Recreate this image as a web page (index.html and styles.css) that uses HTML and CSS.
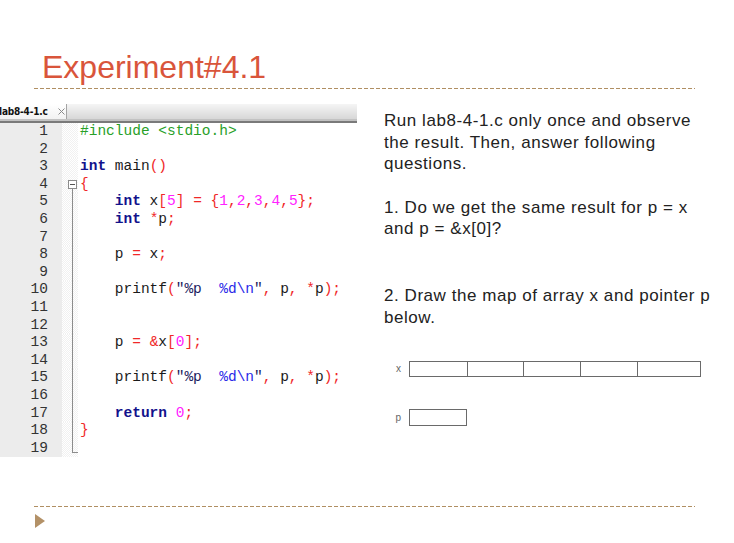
FILE: index.html
```html
<!DOCTYPE html>
<html lang="en">
<head>
<meta charset="utf-8">
<title>Experiment#4.1</title>
<link rel="stylesheet" href="styles.css">
</head>
<body>
<header class="head">
  <h1 class="slide-title">Experiment#4.1</h1>
  <div class="rule"></div>
</header>
<main class="main">
  <section class="editor">
    <div class="tabbar">
      <div class="tab"><span class="tab-name">lab8-4-1.c</span>
        <svg class="tab-x" width="7" height="7" viewBox="0 0 7 7"><path d="M0.5 0.5L6.5 6.5M6.5 0.5L0.5 6.5" stroke="#8a8a8a" stroke-width="1" fill="none"/></svg>
      </div>
    </div>
    <div class="code-area">
      <div class="row"><span class="ln">1</span><span class="fold"></span><span class="code"><span class="pp">#include &lt;stdio.h&gt;</span></span></div>
      <div class="row"><span class="ln">2</span><span class="fold"></span><span class="code"></span></div>
      <div class="row"><span class="ln">3</span><span class="fold"></span><span class="code"><span class="kw">int</span> main<span class="op">()</span></span></div>
      <div class="row"><span class="ln">4</span><span class="fold fold-open"><span class="fold-box"></span></span><span class="code"><span class="op">{</span></span></div>
      <div class="row"><span class="ln">5</span><span class="fold fold-line"></span><span class="code">    <span class="kw">int</span> x<span class="op">[</span><span class="num">5</span><span class="op">]</span> <span class="op">=</span> <span class="op">{</span><span class="num">1</span><span class="op">,</span><span class="num">2</span><span class="op">,</span><span class="num">3</span><span class="op">,</span><span class="num">4</span><span class="op">,</span><span class="num">5</span><span class="op">};</span></span></div>
      <div class="row"><span class="ln">6</span><span class="fold fold-line"></span><span class="code">    <span class="kw">int</span> <span class="op">*</span>p<span class="op">;</span></span></div>
      <div class="row"><span class="ln">7</span><span class="fold fold-line"></span><span class="code"></span></div>
      <div class="row"><span class="ln">8</span><span class="fold fold-line"></span><span class="code">    p <span class="op">=</span> x<span class="op">;</span></span></div>
      <div class="row"><span class="ln">9</span><span class="fold fold-line"></span><span class="code"></span></div>
      <div class="row"><span class="ln">10</span><span class="fold fold-line"></span><span class="code">    printf<span class="op">(</span><span class="str-a">"%p</span><span class="str-b">  %d\n</span><span class="str-a">"</span><span class="op">,</span> p<span class="op">,</span> <span class="op">*</span>p<span class="op">);</span></span></div>
      <div class="row"><span class="ln">11</span><span class="fold fold-line"></span><span class="code"></span></div>
      <div class="row"><span class="ln">12</span><span class="fold fold-line"></span><span class="code"></span></div>
      <div class="row"><span class="ln">13</span><span class="fold fold-line"></span><span class="code">    p <span class="op">=</span> <span class="op">&amp;</span>x<span class="op">[</span><span class="num">0</span><span class="op">];</span></span></div>
      <div class="row"><span class="ln">14</span><span class="fold fold-line"></span><span class="code"></span></div>
      <div class="row"><span class="ln">15</span><span class="fold fold-line"></span><span class="code">    printf<span class="op">(</span><span class="str-a">"%p</span><span class="str-b">  %d\n</span><span class="str-a">"</span><span class="op">,</span> p<span class="op">,</span> <span class="op">*</span>p<span class="op">);</span></span></div>
      <div class="row"><span class="ln">16</span><span class="fold fold-line"></span><span class="code"></span></div>
      <div class="row"><span class="ln">17</span><span class="fold fold-line"></span><span class="code">    <span class="kw">return</span> <span class="num">0</span><span class="op">;</span></span></div>
      <div class="row"><span class="ln">18</span><span class="fold fold-line"></span><span class="code"><span class="op">}</span></span></div>
      <div class="row"><span class="ln">19</span><span class="fold fold-end"></span><span class="code"></span></div>
    </div>
  </section>
  <section class="qa">
    <p class="p1">Run lab8-4-1.c only once and observe the result. Then, answer following questions.</p>
    <p class="p2">1. Do we get the same result for p = x and p = &amp;x[0]?</p>
    <p class="p3">2. Draw the map of array x and pointer p below.</p>
    <div class="mem-row mem-x">
      <span class="mem-label">x</span>
      <div class="array-box"><span class="cell"></span><span class="cell"></span><span class="cell"></span><span class="cell"></span><span class="cell"></span></div>
    </div>
    <div class="mem-row mem-p">
      <span class="mem-label">p</span>
      <div class="ptr-box"></div>
    </div>
  </section>
</main>
<footer class="foot">
  <div class="rule rule-bottom"></div>
  <div class="bullet"></div>
</footer>
</body>
</html>
```
FILE: styles.css
```css
html, body {
  margin: 0;
  padding: 0;
}
body {
  width: 734px;
  height: 543px;
  overflow: hidden;
  background: #ffffff;
  font-family: "Liberation Sans", Arial, sans-serif;
}

.slide-title {
  margin: 0;
  padding: 50px 0 0 42px;
  font-size: 32px;
  line-height: 34px;
  font-weight: normal;
  color: #d9553b;
}

.rule {
  width: 661px;
  height: 1px;
  margin: 4px 0 0 34px;
  background: repeating-linear-gradient(90deg, #b08f63 0 4px, transparent 4px 6px);
}

.main {
  display: flex;
  align-items: flex-start;
  margin-top: 15px;
  height: 402px;
}

/* ---------- editor ---------- */
.editor {
  width: 357px;
  flex: none;
}
.tabbar {
  height: 19px;
  background: linear-gradient(to bottom, #f5f5f5 0, #d7d7d7 15px, #c2c2c2 15px, #c2c2c2 17px, #7a7a7a 17px, #7a7a7a 19px);
}
.tab {
  width: 66px;
  height: 15px;
  background: linear-gradient(#ffffff, #f2f2f2);
  border-right: 1px solid #a4a4a4;
  display: flex;
  align-items: center;
  overflow: hidden;
}
.tab-name {
  margin-left: -1px;
  font-family: "DejaVu Sans Condensed", "Liberation Sans", sans-serif;
  font-weight: bold;
  font-size: 10px;
  letter-spacing: -0.2px;
  color: #111;
}
.tab-x {
  margin-left: 10px;
}

.code-area {
  font-family: "Liberation Mono", "Courier New", monospace;
  font-size: 14.5px;
}
.row {
  display: grid;
  grid-template-columns: 62px 16px 1fr;
  height: 17.6px;
  line-height: 17.6px;
}
.ln {
  background: #ececec;
  text-align: right;
  padding-right: 14px;
  color: #333333;
}
.fold {
  background: repeating-conic-gradient(#f1f1f1 0% 25%, #ffffff 0% 50%) 0 0 / 2px 2px;
}
.fold-line {
  background:
    linear-gradient(#8c8c8c, #8c8c8c) no-repeat 10px 0 / 1px 100%,
    repeating-conic-gradient(#f1f1f1 0% 25%, #ffffff 0% 50%) 0 0 / 2px 2px;
}
.fold-open {
  display: flex;
  flex-direction: column;
  background:
    linear-gradient(#8c8c8c, #8c8c8c) no-repeat 10px 13px / 1px 100%,
    repeating-conic-gradient(#f1f1f1 0% 25%, #ffffff 0% 50%) 0 0 / 2px 2px;
}
.fold-box {
  width: 9px;
  height: 9px;
  margin: 4px 0 0 6px;
  box-sizing: border-box;
  border: 1px solid #8c8c8c;
  background: linear-gradient(#555, #555) no-repeat center / 5px 1px, #ffffff;
}
.fold-end {
  background:
    linear-gradient(#8c8c8c, #8c8c8c) no-repeat 10px 0 / 1px 13px,
    linear-gradient(#8c8c8c, #8c8c8c) no-repeat 10px 12px / 6px 1px,
    repeating-conic-gradient(#f1f1f1 0% 25%, #ffffff 0% 50%) 0 0 / 2px 2px;
}
.code {
  white-space: pre;
  padding-left: 2px;
  color: #1a1a1a;
  background: #ffffff;
}
.pp { color: #28a028; }
.kw { color: #12128c; font-weight: bold; }
.op { color: #f02828; }
.num { color: #ff22ff; }
.str-a { color: #1c1c60; }
.str-b { color: #2a2ae8; }

/* ---------- questions ---------- */
.qa {
  margin-left: 27px;
  width: 334px;
  padding-top: 6px;
  font-size: 17px;
  line-height: 21.6px;
  letter-spacing: 0.55px;
  color: #222222;
}
.qa p {
  margin: 0;
}
.qa .p2 { margin-top: 22px; }
.qa .p3 { margin-top: 45px; }

.mem-row {
  display: flex;
  align-items: center;
  letter-spacing: 0;
}
.mem-x { margin-top: 33px; }
.mem-p { margin-top: 32px; }
.mem-label {
  width: 17px;
  padding-right: 8px;
  text-align: right;
  font-size: 10px;
  line-height: 12px;
  color: #666666;
}
.array-box {
  display: grid;
  grid-template-columns: 57px 56px 57px 57px 1fr;
  width: 292px;
  height: 16px;
  box-sizing: border-box;
  border: 1px solid #6a6a6a;
}
.cell + .cell {
  border-left: 1px solid #6a6a6a;
}
.ptr-box {
  width: 58px;
  height: 17px;
  box-sizing: border-box;
  border: 1px solid #6a6a6a;
}

/* ---------- footer ---------- */
.rule-bottom {
  margin-top: 0;
}
.bullet {
  width: 0;
  height: 0;
  margin: 7px 0 0 35px;
  border-left: 10px solid #b39167;
  border-top: 7.5px solid transparent;
  border-bottom: 7.5px solid transparent;
}
```
